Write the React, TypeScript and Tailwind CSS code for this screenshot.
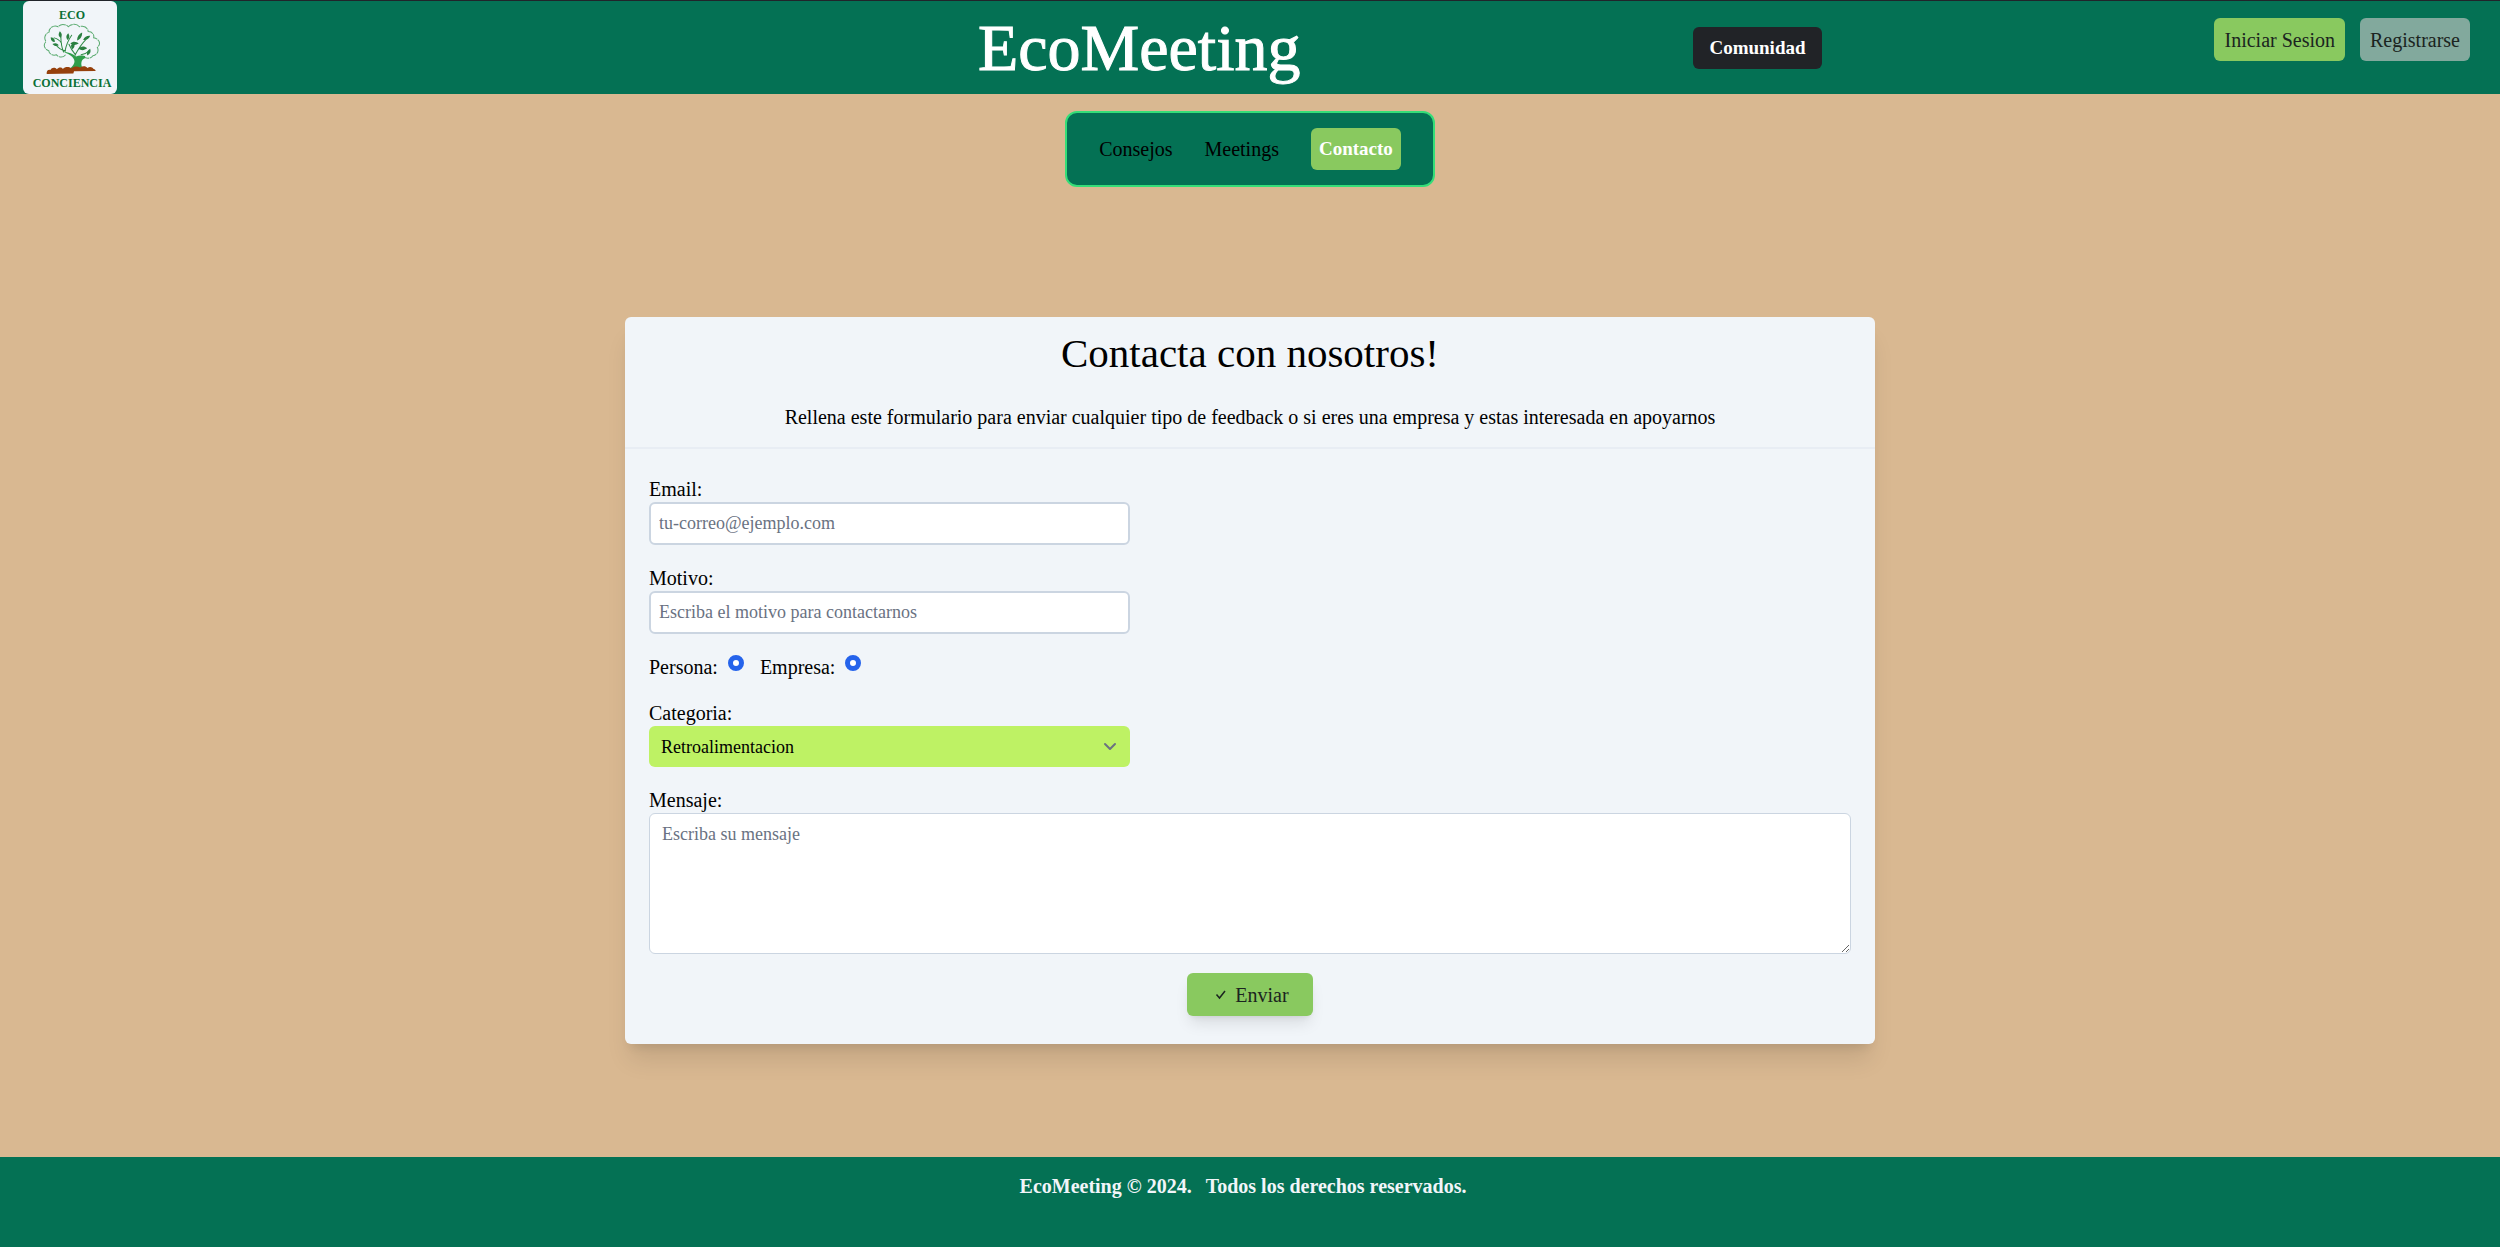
import React from "react";

const navLink = "text-black hover:text-white";
const field = "h-[43px] w-full rounded-md border-2 border-[#cbd5e1] bg-white px-2 text-lg text-black placeholder:text-gray-500";
const label = "block leading-[25px]";
const radio = "mt-0 size-4 appearance-none rounded-full border-[5px] border-[#2563eb] bg-white";

function Tree() {
  return (
    <svg viewBox="125 68 172 154" className="h-[52px] w-[58px]" fill="none" aria-hidden="true">
      <path
        d="M192 162c-8 10-22 8-27 0-12 4-22-3-23-12-13-4-17-18-8-27-7-10-3-24 9-28 0-14 15-22 27-16 7-9 24-8 30 0 9-9 25-10 33 0 12-5 25 2 26 14 12 0 19 10 16 19 18 2 22 20 11 28 6 12-2 24-13 25-6 9-20 10-28 2"
        stroke="#5bab70"
        strokeWidth="3"
        strokeDasharray="22 2"
      />
      <path d="M203 205c13-12 18-20 14-29-4-10-18-16-34-24 18 3 32 8 40 15 8-3 16-3 26-1 3 3 1 8-4 9-8 5-8 18-2 30z" fill="#2f9e4a" />
      <path d="M186 154c-6-14-8-28-8-45M190 152c4-20 10-34 20-48M220 163c12-22 18-32 32-46M192 151c-10-2-22-8-30-20M222 163c-10-12-16-22-20-32M238 162c10-2 16-4 22-10M180 128c-6-10-14-14-22-16" stroke="#2f8a45" strokeWidth="3" strokeLinecap="round" />
      <path
        d="M178 112c-8-6-8-12-3-20 6 6 8 12 3 20zM198 118c-6-8-4-14 2-20 5 8 4 14-2 20zM160 124c-9 0-12-6-12-14 9 1 13 6 12 14zM226 120c0-12 6-20 15-24 1 11-5 20-15 24zM244 118c4-9 12-13 21-12-3 9-11 14-21 12zM206 128c8-7 18-6 25 1-9 6-18 6-25-1zM212 146c-6-8-5-16 2-21 7 7 6 15-2 21zM230 144c8-8 18-8 26-1-9 7-18 7-26 1zM256 164c-2-10 1-16 9-20 3 9 0 16-9 20zM172 134c-8 4-14 2-19-4 8-4 14-3 19 4z"
        fill="#2a8040"
      />
      <path d="M136 219c-1-8 3-13 11-12 4-8 14-8 19-2 6-7 14-6 18-1 7-8 18-7 25-2 8-6 18-6 26-2 8-6 17-5 22 1 7-5 15-2 18 3 4 1 6 3 6 6l-64 1-2 7z" fill="#96400c" />
    </svg>
  );
}

export default function App() {
  return (
    <div className="flex min-h-screen flex-col bg-[#d9b891] font-['Liberation_Serif',serif] text-xl leading-6 text-black">
      <header className="flex h-[94px] border-t border-[#20242a] bg-[#047154]">
        <div className="w-[23.4%] pl-[23px]">
          <a href="#inicio" className="flex h-full w-[94px] flex-col items-center rounded-md bg-slate-100 pt-1.5 pl-1 text-xs font-bold text-[#0a7035]">
            <span className="leading-4">ECO</span>
            <Tree />
            <span className="leading-4">CONCIENCIA</span>
          </a>
        </div>
        <div className="flex flex-1 items-center justify-evenly">
          <h1 className="text-[66px] leading-none text-white [-webkit-text-stroke:1px_white]">EcoMeeting</h1>
          <a href="#comunidad" className="rounded-md bg-[#212327] px-4 py-[9px] text-[19px] font-bold text-white">Comunidad</a>
        </div>
        <div className="flex items-start gap-[15px] pt-[17px] pr-[30px]">
          <button className="h-[43px] rounded-md bg-[#89c95f] px-2.5 text-[#1b2420]">Iniciar Sesion</button>
          <button className="h-[43px] rounded-md bg-[#82a99d] px-2.5 text-[#1b2420]">Registrarse</button>
        </div>
      </header>

      <main className="flex flex-1 flex-col items-center">
        <nav className="mt-[17px] flex h-[76px] items-center gap-8 rounded-xl border-2 border-[#35de78] bg-[#047154] px-8">
          <a href="#consejos" className={navLink}>Consejos</a>
          <a href="#meetings" className={navLink}>Meetings</a>
          <a href="#contacto" className="rounded-md bg-[#89c95f] px-2 py-[9px] text-[19px] font-bold text-white">Contacto</a>
        </nav>

        <section className="mt-[130px] w-1/2 rounded-md bg-slate-100 shadow-xl">
          <div className="border-b-2 border-slate-200/60 pt-3 pb-[18px] text-center">
            <h2 className="text-[41px] leading-[48px]">Contacta con nosotros!</h2>
            <p className="mt-7">
              Rellena este formulario para enviar cualquier tipo de feedback o si eres una empresa y estas interesada en apoyarnos
            </p>
          </div>
          <form className="px-6 pt-7 pb-7" onSubmit={(e) => e.preventDefault()}>
            <div className="flex flex-col gap-[21px]">
              <div className="w-2/5">
                <label htmlFor="email" className={label}>Email:</label>
                <input id="email" type="email" placeholder="tu-correo@ejemplo.com" className={field} />
              </div>
              <div className="w-2/5">
                <label htmlFor="motivo" className={label}>Motivo:</label>
                <input id="motivo" type="text" placeholder="Escriba el motivo para contactarnos" className={field} />
              </div>
              <div className="flex h-[25px] gap-4">
                <div className="flex gap-2.5">
                  <label htmlFor="persona" className={label}>Persona:</label>
                  <input id="persona" type="radio" name="persona" defaultChecked className={radio} />
                </div>
                <div className="flex gap-2.5">
                  <label htmlFor="empresa" className={label}>Empresa:</label>
                  <input id="empresa" type="radio" name="empresa" defaultChecked className={radio} />
                </div>
              </div>
              <div className="w-2/5">
                <label htmlFor="categoria" className={label}>Categoria:</label>
                <div className="relative">
                  <select id="categoria" className="block h-[41px] w-full appearance-none rounded-md bg-[#bef264] px-3 text-lg text-black">
                    <option>Retroalimentacion</option>
                  </select>
                  <svg viewBox="0 0 20 20" className="pointer-events-none absolute top-2.5 right-2.5 size-5" fill="none" stroke="#6b7280" strokeWidth="2" strokeLinecap="round" strokeLinejoin="round" aria-hidden="true">
                    <path d="M5 8l5 5 5-5" />
                  </svg>
                </div>
              </div>
              <div>
                <label htmlFor="mensaje" className={label}>Mensaje:</label>
                <textarea id="mensaje" placeholder="Escriba su mensaje" className="block h-[141px] w-full rounded-md border border-[#cbd5e1] bg-white px-3 py-2 text-lg leading-6 placeholder:text-gray-500" />
              </div>
            </div>
            <button type="submit" className="mx-auto mt-[19px] flex h-[43px] items-center gap-1 rounded-md bg-[#89c95f] px-6 text-[#1b2420] shadow-lg">
              <svg viewBox="0 0 20 20" className="size-5" fill="none" stroke="currentColor" strokeWidth="1.5" aria-hidden="true">
                <path d="M5.5 9.5l3 3.5 5.500-7" />
              </svg>
              Enviar
            </button>
          </form>
        </section>
      </main>

      <footer className="flex h-[90px] justify-center gap-3.5 bg-[#047154] pt-[17px] pr-3.5 font-bold text-[#f1f5f9]">
        <p>EcoMeeting © 2024.</p>
        <p>Todos los derechos reservados.</p>
      </footer>
    </div>
  );
}
